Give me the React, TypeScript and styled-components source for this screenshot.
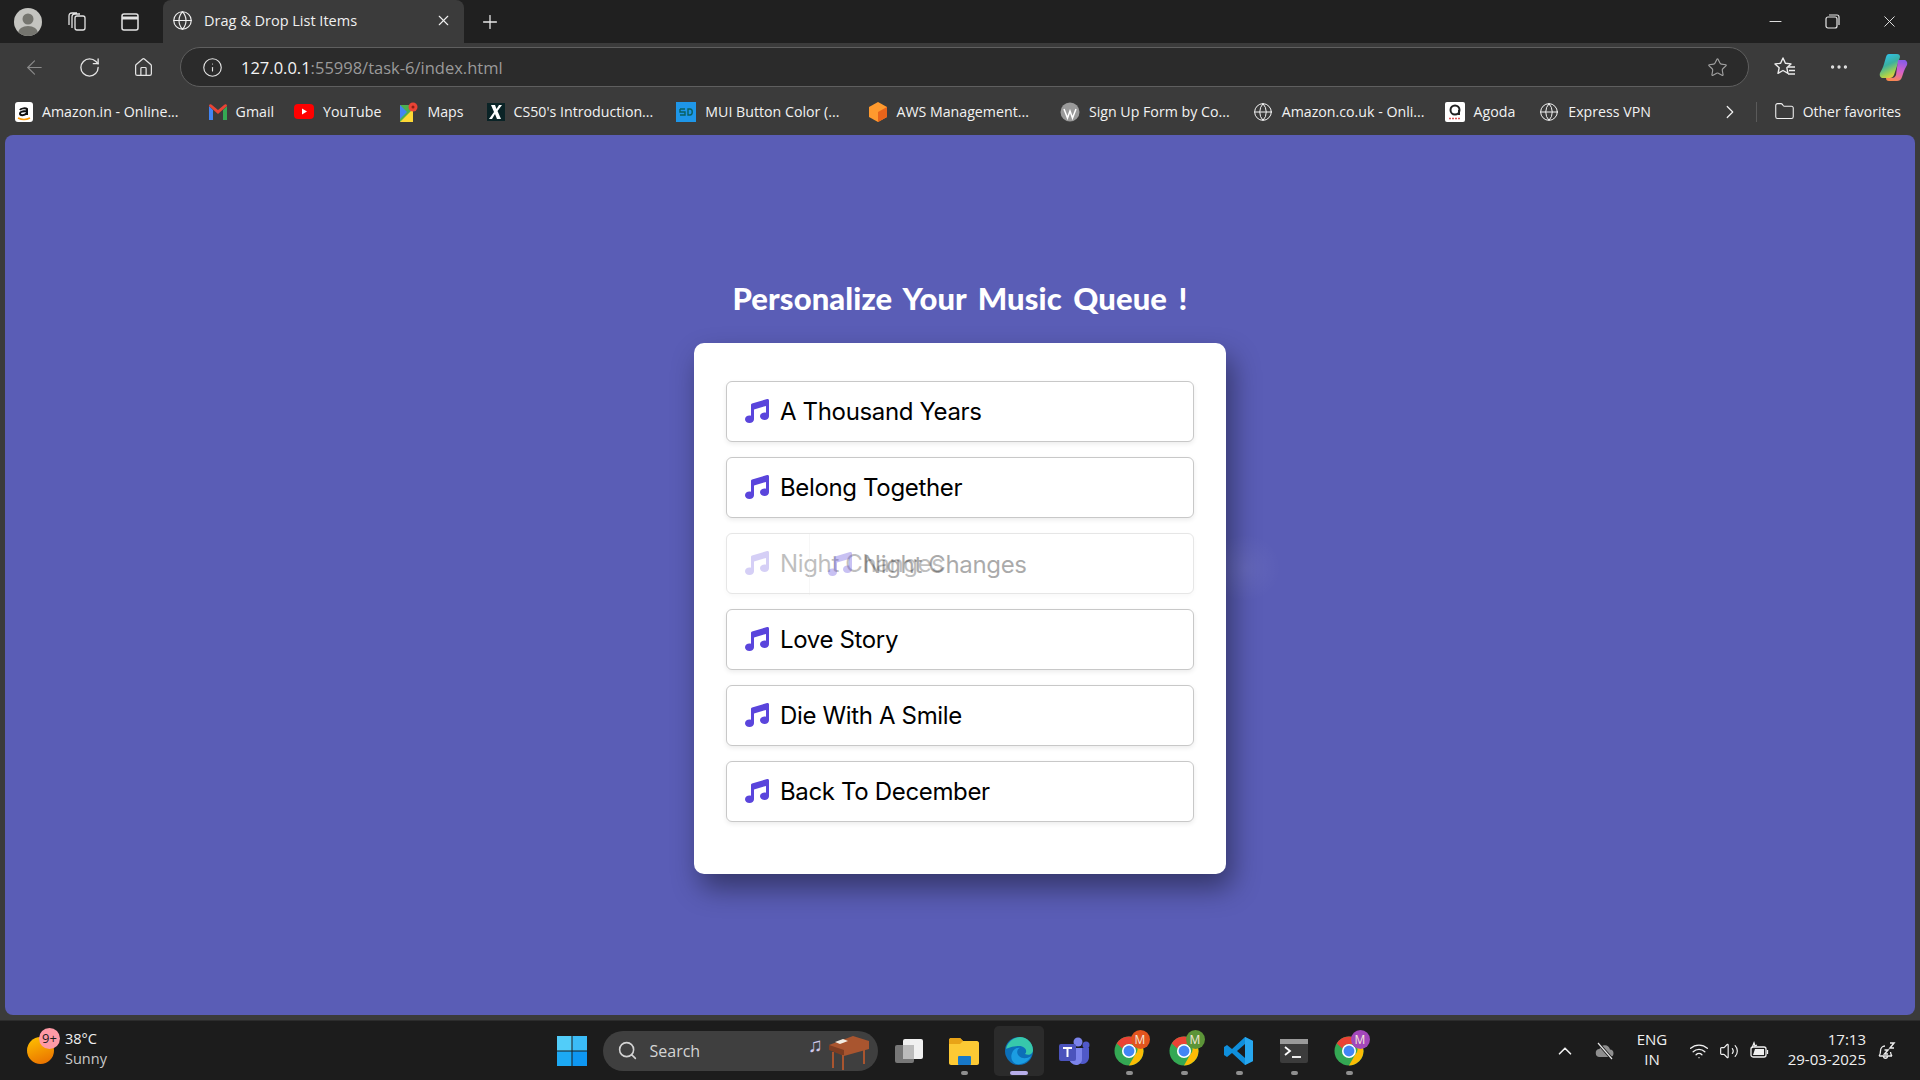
import React from "react";
import styled, { createGlobalStyle } from "styled-components";
import { FaMusic } from "react-icons/fa6";
import {
  ArrowLeft,
  RotateCw,
  Home,
  Info,
  Star,
  MoreHorizontal,
  Plus,
  X,
  Minus,
  Globe,
  ChevronRight,
  ChevronUp,
  Folder,
  Search,
  Wifi,
  Volume2,
} from "lucide-react";

const GlobalStyle = createGlobalStyle`
  html, body { margin: 0; padding: 0; height: 100%; background: #3b3b3b; }
  body { font-family: "Open Sans", "Liberation Sans", sans-serif; overflow: hidden; }
  * { box-sizing: border-box; }
`;

const Screen = styled.div`
  width: 1920px;
  height: 1080px;
  display: flex;
  flex-direction: column;
  background: #3b3b3b;
`;

const TabStrip = styled.div`
  height: 43px;
  background: #202020;
  display: flex;
  align-items: center;
  padding-left: 14px;
  color: #e8e8e8;
`;

const Avatar = styled.div`
  width: 28px;
  height: 28px;
  border-radius: 50%;
  overflow: hidden;
  margin-right: 23px;
`;

const StripIcon = styled.div<{ $gap: number }>`
  width: 24px;
  height: 24px;
  margin-right: ${(p) => p.$gap}px;
  display: flex;
  align-items: center;
  justify-content: center;
`;

const Tab = styled.div`
  width: 301px;
  height: 43px;
  background: #3b3b3b;
  border-radius: 8px 8px 0 0;
  display: flex;
  align-items: center;
  padding: 0 12px 2px 9px;
  gap: 11px;
  font-size: 14.5px;
  color: #f0f0f0;
`;

const TabTitle = styled.span`
  flex: 1;
`;

const NewTab = styled.div`
  margin-left: 15px;
  display: flex;
`;

const WindowControls = styled.div`
  margin-left: auto;
  display: flex;
  align-items: center;
  gap: 39px;
  padding-right: 21px;
`;

const Toolbar = styled.div`
  height: 45px;
  display: flex;
  align-items: center;
  padding: 3px 0 0 23px;
  color: #e4e4e4;
`;

const ToolButton = styled.div<{ $w?: number }>`
  width: ${(p) => p.$w ?? 55}px;
  display: flex;
  align-items: center;
`;

const AddressBar = styled.div`
  width: 1569px;
  height: 40px;
  border: 1px solid #5f5f5f;
  border-radius: 20px;
  background: #2b2b2b;
  display: flex;
  align-items: center;
  padding: 0 20px 0 21px;
  gap: 18px;
  font-size: 16.5px;
`;

const Url = styled.span`
  flex: 1;
  color: #9a9a9a;
  b {
    color: #f4f4f4;
    font-weight: 400;
  }
`;

const ToolRight = styled.div`
  display: grid;
  grid-auto-flow: column;
  grid-auto-columns: 54px;
  justify-items: center;
  align-items: center;
  margin-left: 9px;
`;

const Bookmarks = styled.div`
  height: 47px;
  display: flex;
  align-items: center;
  padding-left: 15px;
  font-size: 14.2px;
  color: #f2f2f2;
`;

const Bookmark = styled.div<{ $gap: number }>`
  display: flex;
  align-items: center;
  gap: 9px;
  margin-right: ${(p) => p.$gap}px;
  white-space: nowrap;
`;

const BookmarkEnd = styled.div`
  margin-left: auto;
  display: flex;
  align-items: center;
  gap: 8px;
  padding-right: 19px;
  font-size: 14px;
`;

const MoreBookmarks = styled(ChevronRight)`
  margin-right: 7px;
`;

const Divider = styled.div`
  width: 1px;
  height: 20px;
  background: #5a5a5a;
  margin-right: 9px;
`;

const Viewport = styled.main`
  width: 1910px;
  height: 880px;
  margin: 0 5px;
  background: #5a5db6;
  border-radius: 8px;
  overflow: hidden;
  display: flex;
  flex-direction: column;
  align-items: center;
  padding-top: 142px;
`;

const Heading = styled.h1`
  margin: 0 0 23px;
  height: 43px;
  line-height: 43px;
  font-family: "Lato", sans-serif;
  font-weight: 900;
  font-size: 31px;
  letter-spacing: 0.1px;
  word-spacing: 4px;
  color: #fff;
`;

const Card = styled.div`
  position: relative;
  width: 532px;
  height: 531px;
  background: #fff;
  border-radius: 10px;
  padding: 38px 32px 0;
  box-shadow: 6px 14px 28px rgba(0, 0, 0, 0.42);
  display: flex;
  flex-direction: column;
  gap: 15px;
`;

const Song = styled.div<{ $dragging?: boolean }>`
  height: 61px;
  background: #fff;
  border: 1px solid ${(p) => (p.$dragging ? "#e6e6e6" : "#c8c8c8")};
  border-radius: 6px;
  box-shadow: 0 2px 5px rgba(0, 0, 0, ${(p) => (p.$dragging ? 0.03 : 0.08)});
  display: flex;
  align-items: center;
  padding-left: 18px;
`;

const Fade = styled.span<{ $dragging?: boolean }>`
  display: flex;
  align-items: center;
  gap: 11px;
  opacity: ${(p) => (p.$dragging ? 0.25 : 1)};
`;

const SongIcon = styled(FaMusic)`
  width: 24px;
  height: 24px;
  margin-top: -2px;
  color: #5a45dc;
  flex: none;
`;

const SongName = styled.span`
  font-family: "Inter", "Open Sans", sans-serif;
  font-size: 24px;
  letter-spacing: -0.35px;
  color: #000;
  white-space: nowrap;
`;

// browser drag image following the pointer, lies over the list
const DragGhost = styled.div`
  position: absolute;
  left: 115px;
  top: 191px;
  width: 468px;
  height: 61px;
  display: flex;
  align-items: center;
  padding-left: 18px;
  gap: 11px;
  opacity: 0.33;
  border-left: 1px solid #e8e8e8;
  pointer-events: none;
`;

const GhostGlow = styled.div`
  position: absolute;
  left: 532px;
  top: 190px;
  width: 56px;
  height: 70px;
  background: radial-gradient(ellipse at 35% 50%, rgba(255, 255, 255, 0.06), rgba(255, 255, 255, 0) 68%);
  pointer-events: none;
`;

const Taskbar = styled.footer`
  margin-top: 5px;
  height: 60px;
  background: #1c1c1c;
  border-top: 1px solid #2c2c2c;
  display: grid;
  grid-template-columns: 1fr auto 1fr;
  align-items: center;
  color: #f0f0f0;
`;

const Weather = styled.div`
  display: flex;
  align-items: center;
  gap: 11px;
  padding-left: 27px;
  font-size: 14.5px;
  line-height: 20px;
`;

const Sun = styled.div`
  position: relative;
  width: 27px;
  height: 27px;
  border-radius: 50%;
  background: linear-gradient(160deg, #ffc400, #e86a00);
`;

const SunBadge = styled.div`
  position: absolute;
  top: -9px;
  left: 12px;
  width: 21px;
  height: 21px;
  border-radius: 50%;
  background: #ff9aa6;
  color: #1c1c1c;
  font-size: 13px;
  text-align: center;
  line-height: 21px;
`;

const WeatherLines = styled.div`
  margin-top: -3px;
`;

const WeatherNote = styled.div`
  color: #c9c9c9;
`;

const TaskCenter = styled.div`
  display: flex;
  align-items: center;
  margin-left: 15px;
`;

const StartIcon = styled.div`
  margin-right: 16px;
  display: flex;
`;

const SearchBox = styled.div`
  width: 275px;
  height: 40px;
  border-radius: 20px;
  background: #3f3f3f;
  display: flex;
  align-items: center;
  padding: 0 8px 0 14px;
  gap: 12px;
  font-size: 16px;
  color: #d4d4d4;
  margin-right: 6px;
`;

const SearchArt = styled.div`
  margin-left: auto;
  display: flex;
`;

const AppSlot = styled.div<{ $active?: boolean }>`
  position: relative;
  width: 50px;
  height: 50px;
  margin-right: 5px;
  border-radius: 5px;
  background: ${(p) => (p.$active ? "#2b2b2b" : "transparent")};
  display: flex;
  align-items: center;
  justify-content: center;
`;

const RunDot = styled.div<{ $active?: boolean }>`
  position: absolute;
  bottom: 1px;
  left: 50%;
  width: ${(p) => (p.$active ? 18 : 7)}px;
  height: 4px;
  margin-left: ${(p) => (p.$active ? -9 : -3)}px;
  border-radius: 2px;
  background: ${(p) => (p.$active ? "#b8aeea" : "#8f8f8f")};
`;

const ChromeBadge = styled.div<{ $color: string }>`
  position: absolute;
  top: 4px;
  right: 4px;
  width: 19px;
  height: 19px;
  border-radius: 50%;
  background: ${(p) => p.$color};
  color: #f3e6d8;
  font-size: 12px;
  line-height: 19px;
  text-align: center;
`;

const Tray = styled.div`
  display: flex;
  align-items: center;
  justify-content: flex-end;
  padding-right: 23px;
`;

const TrayChevron = styled(ChevronUp)`
  margin-right: 19px;
`;

const TrayText = styled.div<{ $align: string; $w: number }>`
  width: ${(p) => p.$w}px;
  margin-top: -3px;
  text-align: ${(p) => p.$align};
  font-size: 15px;
  line-height: 20px;
`;

const TrayIcons = styled.div`
  display: flex;
  align-items: center;
  gap: 10px;
`;

const TrayBell = styled.div`
  margin-left: 9px;
  display: flex;
`;

const songs = [
  "A Thousand Years",
  "Belong Together",
  "Night Changes",
  "Love Story",
  "Die With A Smile",
  "Back To December",
];

const EdgeLogo = () => (
  <svg width="30" height="30" viewBox="0 0 30 30">
    <circle cx="15" cy="15" r="14" fill="#0c6fb8" />
    <path d="M2 13C4 4 12 1 16 1c7 0 13 6 13 13 0 4-4 6-8 4 3-3 0-8-6-8-6 0-11 2-13 3z" fill="#37c8ab" />
    <path d="M12 28C7 26 6 20 9 15c2-3 6-4 7-3-3 1-4 5-1 8 3 3 8 3 12 0-2 5-8 9-15 8z" fill="#1b9de2" />
  </svg>
);

const ChromeLogo = () => (
  <svg width="30" height="30" viewBox="0 0 32 32">
    <circle cx="16" cy="16" r="15.500" fill="#34a853" />
    <path d="M16 .5A15.500 15.500 0 0 1 29.500 8.500H16a7.500 7.500 0 0 0-7 4.700L3 8A15.500 15.500 0 0 1 16 .5z" fill="#ea4335" />
    <path d="M29.500 8.500A15.500 15.500 0 0 1 16 31.500l6.500-11.500a7.500 7.500 0 0 0 0-11.500z" fill="#fbbc05" />
    <circle cx="16" cy="16" r="7.500" fill="#fff" />
    <circle cx="16" cy="16" r="5.800" fill="#4285f4" />
  </svg>
);

const StartLogo = () => (
  <svg width="30" height="30" viewBox="0 0 30 30">
    <path d="M0 0h14.500v14.500H0z" fill="#52cdf9" />
    <path d="M15.500 0H30v14.500H15.500z" fill="#3bbcf7" />
    <path d="M0 15.500h14.500V30H0z" fill="#1ca9f4" />
    <path d="M15.500 15.500H30V30H15.500z" fill="#0e97f2" />
  </svg>
);

const App: React.FC = () => {
  return (
    <Screen>
      <GlobalStyle />
      <TabStrip>
        <Avatar>
          <svg width="28" height="28" viewBox="0 0 28 28">
            <rect width="28" height="28" fill="#c4c4c0" />
            <circle cx="14" cy="11" r="5.500" fill="#75756f" />
            <ellipse cx="14" cy="25" rx="10" ry="7" fill="#75756f" />
          </svg>
        </Avatar>
        <StripIcon $gap={29}>
          <svg width="22" height="22" viewBox="0 0 22 22" fill="none" stroke="#e4e4e4" strokeWidth="1.300">
            <rect x="9" y="5" width="10" height="14" rx="2" />
            <path d="M6 17V6c0-2 1-3 3-3h5M3 14V5c0-2 1-3 3-3h5" />
          </svg>
        </StripIcon>
        <StripIcon $gap={21}>
          <svg width="20" height="20" viewBox="0 0 20 20" fill="none" stroke="#e4e4e4" strokeWidth="1.500">
            <rect x="2" y="2" width="16" height="16" rx="2" />
            <path d="M2 6h16" strokeWidth="3" />
          </svg>
        </StripIcon>
        <Tab>
          <Globe size={21} strokeWidth={1.3} />
          <TabTitle>Drag &amp; Drop List Items</TabTitle>
          <X size={17} strokeWidth={1.5} />
        </Tab>
        <NewTab>
          <Plus size={22} strokeWidth={1.4} />
        </NewTab>
        <WindowControls>
          <Minus size={19} strokeWidth={1.2} />
          <svg width="17" height="17" viewBox="0 0 17 17" fill="none" stroke="#e8e8e8" strokeWidth="1.200">
            <rect x="2" y="4" width="11" height="11" rx="2" />
            <path d="M5 2h8c1.500 0 2 .5 2 2v8" />
          </svg>
          <X size={19} strokeWidth={1.2} />
        </WindowControls>
      </TabStrip>

      <Toolbar>
        <ToolButton>
          <ArrowLeft size={23} strokeWidth={1.2} color="#8a8a8a" />
        </ToolButton>
        <ToolButton>
          <RotateCw size={23} strokeWidth={1.4} />
        </ToolButton>
        <ToolButton $w={47}>
          <Home size={21} strokeWidth={1.4} />
        </ToolButton>
        <AddressBar>
          <Info size={21} strokeWidth={1.3} />
          <Url>
            <b>127.0.0.1</b>:55998/task-6/index.html
          </Url>
          <Star size={21} strokeWidth={1.3} color="#a0a0a0" />
        </AddressBar>
        <ToolRight>
          <svg width="24" height="24" viewBox="0 0 24 24" fill="none" stroke="#ececec" strokeWidth="1.400" strokeLinejoin="round">
            <path d="M10 3l2.400 5.300 5.600.6-4.200 3.800 1.200 5.600L10 15.500l-5 2.800 1.200-5.600L2 8.900l5.600-.6z" />
            <path d="M15 12h7M16 15.500h6M15 19h7" />
          </svg>
          <MoreHorizontal size={22} strokeWidth={1.6} />
          <svg width="30" height="30" viewBox="0 0 30 30">
            <defs>
              <linearGradient id="copilotA" x1="0.2" y1="0" x2="0.6" y2="1">
                <stop offset="0" stopColor="#2fc4f0" />
                <stop offset="0.45" stopColor="#3bb0a0" />
                <stop offset="0.8" stopColor="#a6d24c" />
                <stop offset="1" stopColor="#f5c542" />
              </linearGradient>
              <linearGradient id="copilotB" x1="0.6" y1="0" x2="0.3" y2="1">
                <stop offset="0" stopColor="#8a5ce6" />
                <stop offset="0.5" stopColor="#d860c8" />
                <stop offset="1" stopColor="#fb8a4c" />
              </linearGradient>
            </defs>
            <path d="M11 2h8c2 0 3 1 3 3l-6 18c-1 2-2 3-4 3H5c-2 0-4-2-3-5 1-2 3-5 4-9l2-7c.5-2 1.500-3 3-3z" fill="url(#copilotA)" />
            <path d="M20 8h6c2 0 4 2 3 5-1 2-3 5-4 9l-1 3c-1 3-3 4-5 4h-8c-2 0-3-1-3-3h6c2 0 3-1 4-3z" fill="url(#copilotB)" />
          </svg>
        </ToolRight>
      </Toolbar>

      <Bookmarks>
        <Bookmark $gap={30}>
          <svg width="18" height="20" viewBox="0 0 18 20">
            <rect width="18" height="20" rx="3" fill="#fff" />
            <path d="M5 8c1-2 6-2 7-1v6M12 9c-4 0-7 .5-7 2.500S9 14 12 11" fill="none" stroke="#111" strokeWidth="2" />
            <path d="M3 16c4 2 8 2 12 0" fill="none" stroke="#f90" strokeWidth="1.500" />
          </svg>
          Amazon.in - Online...
        </Bookmark>
        <Bookmark $gap={20}>
          <svg width="18" height="16" viewBox="0 0 18 16">
            <path d="M0 2v14h4V6z" fill="#4285f4" />
            <path d="M18 2v14h-4V6z" fill="#34a853" />
            <path d="M0 2c0-2 2-2 3-1l6 5 6-5c1-1 3-1 3 1L9 10z" fill="#ea4335" />
          </svg>
          Gmail
        </Bookmark>
        <Bookmark $gap={19}>
          <svg width="20" height="15" viewBox="0 0 20 15">
            <rect width="20" height="15" rx="4" fill="#f00" />
            <path d="M8 4.500v6l5-3z" fill="#fff" />
          </svg>
          YouTube
        </Bookmark>
        <Bookmark $gap={23}>
          <svg width="18" height="20" viewBox="0 0 18 20">
            <path d="M0 3h13v17H0z" fill="#4caf50" />
            <path d="M0 20l13-13v13z" fill="#fdd835" />
            <path d="M0 3l7 7-7 7z" fill="#4285f4" />
            <circle cx="13" cy="5" r="4.500" fill="#ea4335" />
            <circle cx="13" cy="5" r="1.500" fill="#8e1f16" />
          </svg>
          Maps
        </Bookmark>
        <Bookmark $gap={23}>
          <svg width="18" height="18" viewBox="0 0 18 18">
            <rect width="18" height="18" fill="#0a2326" />
            <path d="M4 2h4l1.500 4L12 2h3l-4.500 6L14 16h-4l-2-5-3 5H2l5-7z" fill="#fff" />
          </svg>
          CS50's Introduction...
        </Bookmark>
        <Bookmark $gap={30}>
          <svg width="20" height="20" viewBox="0 0 20 20">
            <rect width="20" height="20" fill="#1e96e8" />
            <path d="M4 7h5M4 7v3h5v3H4M12 7v6h2c3 0 3-6 0-6z" fill="none" stroke="#0a5f5f" strokeWidth="1.400" />
          </svg>
          MUI Button Color (...
        </Bookmark>
        <Bookmark $gap={31}>
          <svg width="18" height="20" viewBox="0 0 18 20">
            <path d="M9 0l9 5v10l-9 5-9-5V5z" fill="#ff9a2e" />
            <path d="M9 10l9-5v10l-9 5z" fill="#e8641b" />
          </svg>
          AWS Management...
        </Bookmark>
        <Bookmark $gap={23}>
          <svg width="20" height="20" viewBox="0 0 20 20">
            <circle cx="10" cy="10" r="9.500" fill="#9a9a9a" />
            <path d="M4 7l3.500 9L10 9l2.500 7L16 7" fill="none" stroke="#fff" strokeWidth="1.500" />
          </svg>
          Sign Up Form by Co...
        </Bookmark>
        <Bookmark $gap={20}>
          <Globe size={20} strokeWidth={1.2} />
          Amazon.co.uk - Onli...
        </Bookmark>
        <Bookmark $gap={24}>
          <svg width="20" height="20" viewBox="0 0 20 20">
            <rect width="20" height="20" rx="2" fill="#fff" />
            <circle cx="10" cy="8" r="4.500" fill="none" stroke="#222" strokeWidth="2" />
            <path d="M14 8v5" stroke="#222" strokeWidth="2" />
            <path d="M4 16.500h12" stroke="#d55" strokeWidth="1.500" strokeDasharray="2 1" />
          </svg>
          Agoda
        </Bookmark>
        <Bookmark $gap={0}>
          <Globe size={20} strokeWidth={1.2} />
          Express VPN
        </Bookmark>
        <BookmarkEnd>
          <MoreBookmarks size={22} strokeWidth={1.3} />
          <Divider />
          <Folder size={21} strokeWidth={1.2} />
          Other favorites
        </BookmarkEnd>
      </Bookmarks>

      <Viewport>
        <Heading>Personalize Your Music Queue !</Heading>
        <Card>
          {songs.map((song) => {
            const dragging = song === "Night Changes";
            return (
              <Song key={song} $dragging={dragging}>
                <Fade $dragging={dragging}>
                  <SongIcon />
                  <SongName>{song}</SongName>
                </Fade>
              </Song>
            );
          })}
          <DragGhost>
            <SongIcon />
            <SongName>Night Changes</SongName>
          </DragGhost>
          <GhostGlow />
        </Card>
      </Viewport>

      <Taskbar>
        <Weather>
          <Sun>
            <SunBadge>9+</SunBadge>
          </Sun>
          <WeatherLines>
            <div>38°C</div>
            <WeatherNote>Sunny</WeatherNote>
          </WeatherLines>
        </Weather>
        <TaskCenter>
          <StartIcon>
            <StartLogo />
          </StartIcon>
          <SearchBox>
            <Search size={21} strokeWidth={1.8} />
            Search
            <SearchArt>
              <svg width="62" height="38" viewBox="0 0 62 38">
                <text x="0" y="20" fontSize="20" fill="#cfc9ea">♫</text>
                <path d="M21 13l24-9 16 5v8L36 24z" fill="#a9552f" />
                <path d="M21 13l15 5v6l-15-6z" fill="#7d3d22" />
                <path d="M25 20v16M35 23v15M56 16v16" stroke="#a9552f" strokeWidth="2" />
                <path d="M27 10l8-3 5 2-8 3z" fill="#f2ece2" />
              </svg>
            </SearchArt>
          </SearchBox>
          <AppSlot>
            <svg width="30" height="30" viewBox="0 0 30 30">
              <rect x="1" y="9" width="19" height="18" rx="2" fill="#777" />
              <rect x="9" y="3" width="20" height="20" rx="2" fill="#f0f0f0" />
              <rect x="9" y="9" width="11" height="14" fill="#bbb" />
            </svg>
          </AppSlot>
          <AppSlot>
            <svg width="32" height="30" viewBox="0 0 32 30">
              <path d="M1 4c0-1 1-2 2-2h9l3 3h14c1 0 2 1 2 2v20c0 1-1 2-2 2H3c-1 0-2-1-2-2z" fill="#fcc934" />
              <path d="M1 4c0-1 1-2 2-2h9l3 3-3 3H1z" fill="#e8a317" />
              <rect x="10" y="20" width="13" height="9" rx="1" fill="#1778c9" />
            </svg>
            <RunDot />
          </AppSlot>
          <AppSlot $active>
            <EdgeLogo />
            <RunDot $active />
          </AppSlot>
          <AppSlot>
            <svg width="32" height="30" viewBox="0 0 32 30">
              <circle cx="20" cy="6" r="4.500" fill="#7b83eb" />
              <circle cx="28" cy="9" r="3.500" fill="#5059c9" />
              <path d="M13 12h18v9c0 4-3 7-6 7s-6-2-7-6z" fill="#5059c9" />
              <path d="M11 12h13v11c0 4-3 6-6 6s-7-3-7-7z" fill="#7b83eb" />
              <rect x="1" y="8" width="17" height="17" rx="2" fill="#4b53bc" />
              <path d="M5 12h9M9.500 12v9" stroke="#fff" strokeWidth="2" />
            </svg>
          </AppSlot>
          <AppSlot>
            <ChromeLogo />
            <ChromeBadge $color="#e2541e">M</ChromeBadge>
            <RunDot />
          </AppSlot>
          <AppSlot>
            <ChromeLogo />
            <ChromeBadge $color="#5c9438">M</ChromeBadge>
            <RunDot />
          </AppSlot>
          <AppSlot>
            <svg width="30" height="30" viewBox="0 0 30 30">
              <path d="M21 1l8 4v20l-8 4L8 17l-5 4-3-2V11l3-2 5 4z" fill="#0f8fdc" />
              <path d="M21 8l-8 7 8 7z" fill="#1c1c1c" />
              <path d="M21 1l8 4v20l-8 4z" fill="#27a7ef" />
            </svg>
            <RunDot />
          </AppSlot>
          <AppSlot>
            <svg width="30" height="30" viewBox="0 0 30 30">
              <rect x="1" y="3" width="28" height="24" rx="2" fill="#3c3c3c" />
              <rect x="1" y="3" width="28" height="5" fill="#9a9a9a" />
              <path d="M6 11l5 4-5 4" fill="none" stroke="#fff" strokeWidth="1.800" />
              <path d="M13 21h9" stroke="#fff" strokeWidth="1.800" />
            </svg>
            <RunDot />
          </AppSlot>
          <AppSlot>
            <ChromeLogo />
            <ChromeBadge $color="#a347ba">M</ChromeBadge>
            <RunDot />
          </AppSlot>
        </TaskCenter>
        <Tray>
          <TrayChevron size={22} strokeWidth={1.8} />
          <svg width="20" height="20" viewBox="0 0 20 20">
            <path d="M5 16a4 4 0 0 1-.5-8A5.500 5.500 0 0 1 15 8.500 3.800 3.800 0 0 1 15.500 16z" fill="#8f8f8f" />
            <path d="M3 2l14 16" stroke="#1c1c1c" strokeWidth="3" />
            <path d="M3 2l14 16" stroke="#e8e8e8" strokeWidth="1.200" />
          </svg>
          <TrayText $align="center" $w={74}>
            ENG
            <br />
            IN
          </TrayText>
          <TrayIcons>
            <Wifi size={20} strokeWidth={1.6} />
            <Volume2 size={20} strokeWidth={1.4} />
            <svg width="20" height="20" viewBox="0 0 20 20" fill="none" stroke="#f0f0f0" strokeWidth="1.300">
              <rect x="2" y="6" width="15" height="10" rx="2" />
              <path d="M18.500 9v4" />
              <path d="M4 14l2-6h9v6z" fill="#f0f0f0" stroke="none" />
              <path d="M3 7l2-5 1 3 2-1" />
            </svg>
          </TrayIcons>
          <TrayText $align="right" $w={97}>
            17:13
            <br />
            29-03-2025
          </TrayText>
          <TrayBell>
            <svg width="22" height="22" viewBox="0 0 22 22" fill="none" stroke="#ececec" strokeWidth="1.300">
              <path d="M4 16c1-1 1.500-2 1.500-5 0-3 2-5 4.500-5M4 16h13M15.500 12c.2 2 .6 3 1.500 4M8.500 16c0 3 4 3 4 0" />
              <path d="M9.500 10h3.500l-3.500 4h3.500M15 3h4l-4 5h4" strokeWidth="1.500" />
            </svg>
          </TrayBell>
        </Tray>
      </Taskbar>
    </Screen>
  );
};

export default App;
